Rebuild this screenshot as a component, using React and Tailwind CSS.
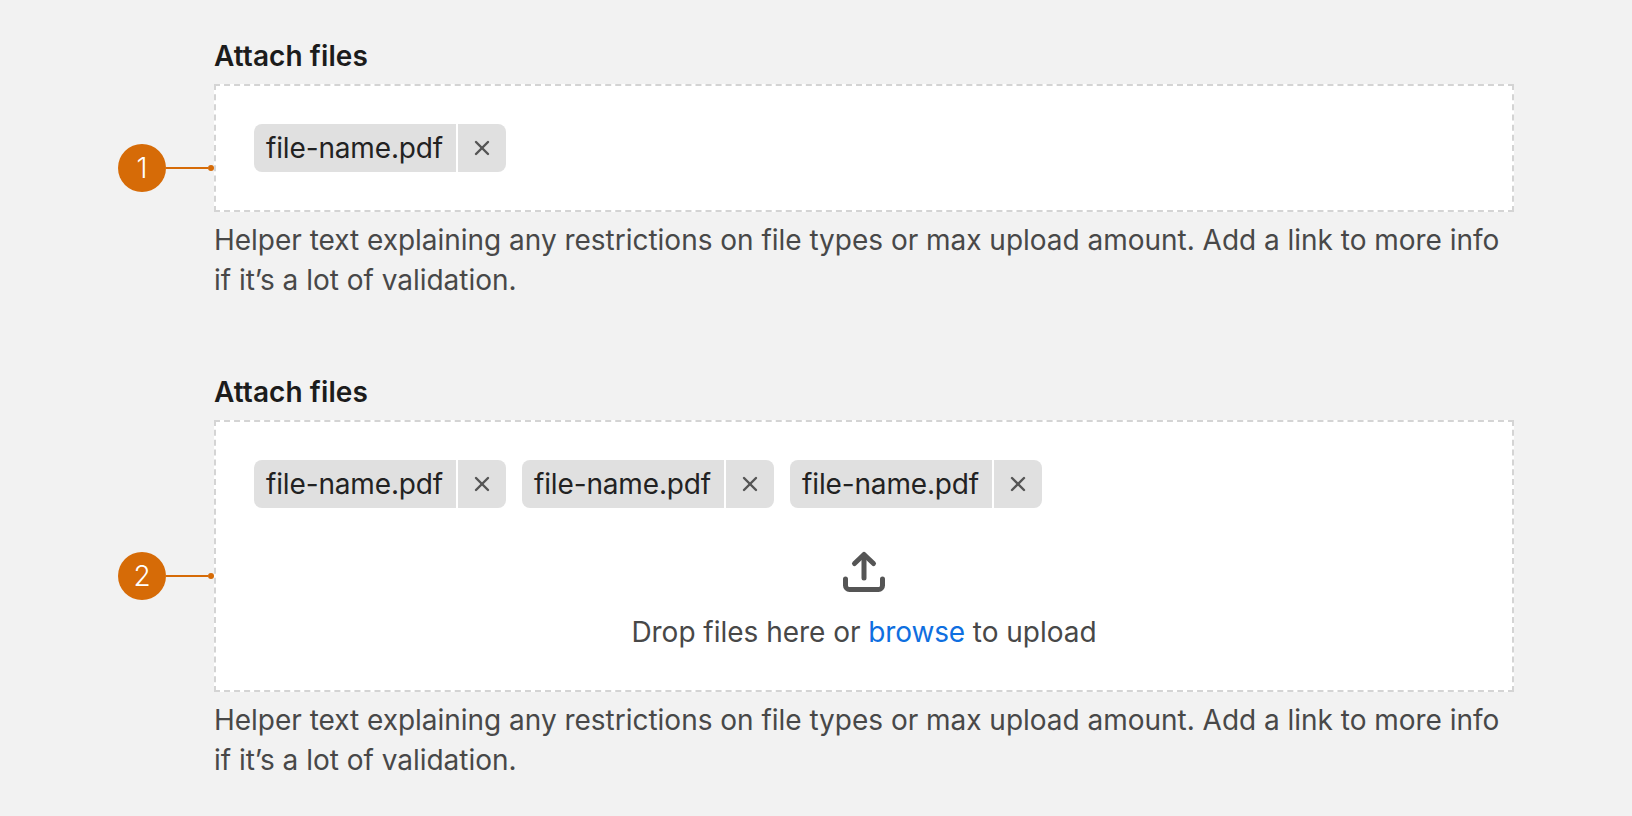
import { X } from 'lucide-react'

function Chip() {
  return (
    <div className="flex h-12 text-[#222222]">
      <span className="flex items-center rounded-l-lg bg-[#e0e0e0] pr-[13px] pl-3 text-[28px] tracking-[-0.15px]">file-name.pdf</span>
      <button type="button" className="ml-0.5 flex w-12 items-center justify-center rounded-r-lg bg-[#e0e0e0] text-[#555555]">
        <X size={24} strokeWidth={2.4} />
      </button>
    </div>
  )
}

function UploadIcon() {
  return (
    <svg width="48" height="48" viewBox="0 0 48 48" fill="none" stroke="#555555" strokeWidth="5" strokeLinecap="round" strokeLinejoin="round">
      <path d="M24 7v23" />
      <path d="M14.5 15.5 24 6.5l9.500 9" />
      <path d="M5.500 31v6.500a4 4 0 0 0 4 4h29a4 4 0 0 0 4-4V31" />
    </svg>
  )
}

function Marker({ number }) {
  return (
    <div className="absolute top-[calc(50%+20px)] left-[-98px] flex -translate-y-1/2 items-center">
      <span className="flex h-12 w-12 items-center justify-center rounded-full bg-[#d66b07] text-[28px] font-light text-white">{number}</span>
      <span className="h-0.5 w-[42px] bg-[#d66b07]" />
      <span className="h-1.5 w-1.5 rounded-full bg-[#d66b07]" />
    </div>
  )
}

function Field({ number, children }) {
  return (
    <section className="w-[1300px]">
      <h2 className="text-[28px] leading-[40px] font-semibold tracking-[0.08px] text-[#1c1c1c]">Attach files</h2>
      <div className="relative mt-2 border-2 border-dashed border-[#d4d4d4] bg-white px-[38px] py-[38px]">
        <Marker number={number} />
        {children}
      </div>
      <p className="mt-2 text-[28px] leading-[40px] tracking-[-0.02px] text-[#484848]">
        Helper text explaining any restrictions on file types or max upload amount. Add a link to more info if it’s a lot of validation.
      </p>
    </section>
  )
}

export default function App() {
  return (
    <div className="flex h-[816px] flex-col gap-[72px] bg-[#f2f2f2] pt-9 pl-[214px] font-['Inter',sans-serif] antialiased">
      <Field number={1}>
        <div className="flex gap-4">
          <Chip />
        </div>
      </Field>
      <Field number={2}>
        <div className="flex gap-4">
          <Chip />
          <Chip />
          <Chip />
        </div>
        <div className="mt-10 flex flex-col items-center gap-4">
          <UploadIcon />
          <p className="text-[28px] leading-[40px] tracking-[-0.02px] text-[#484848]">
            Drop files here or <a className="text-[#0f6fe0] tracking-[-0.15px]">browse</a> to upload
          </p>
        </div>
      </Field>
    </div>
  )
}
